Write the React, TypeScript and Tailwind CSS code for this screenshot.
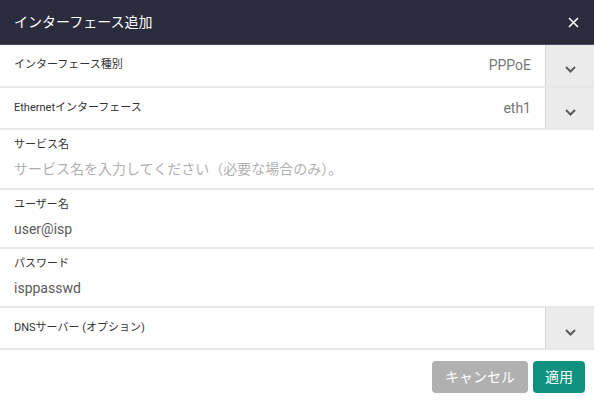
import React from "react";

const font = { fontFamily: 'Roboto, "Noto Sans CJK JP", sans-serif' };

function Chevron() {
  return (
    <svg width="11" height="7" viewBox="0 0 11 7" className="mt-2">
      <polyline points="1,1 5.5,5.5 10,1" fill="none" stroke="#5a5a5a" strokeWidth="2" />
    </svg>
  );
}

function SelectRow({ label, value, h }: { label: string; value?: string; h: string }) {
  return (
    <div className={`flex ${h} border-b-2 border-[#e8e8e8]`}>
      <div className="flex flex-1 items-center justify-between pl-[14px] pr-[14px]">
        <span className="text-[11px] text-[#333]">{label}</span>
        {value && <span className="text-[14px] text-[#777]">{value}</span>}
      </div>
      <div className="flex w-[49px] items-center justify-center border-l border-[#d4d4d4] bg-[#ebebeb]">
        <Chevron />
      </div>
    </div>
  );
}

function InputRow({ label, value, placeholder, h }: { label: string; value?: string; placeholder?: boolean; h: string }) {
  return (
    <div className={`${h} border-b-2 border-[#e8e8e8] pl-[14px] pt-[7px]`}>
      <div className="text-[11px] leading-[16px] text-[#333]">{label}</div>
      <div className={`mt-[6px] text-[14px] leading-[20px] ${placeholder ? "text-[#b0b0b0]" : "text-[#5a5a5a]"}`}>
        {value}
      </div>
    </div>
  );
}

export default function App() {
  return (
    <div className="h-[405px] w-[594px] overflow-hidden bg-white" style={font}>
      <div className="flex h-[45px] items-center justify-between border-b border-[#4a4b5c] bg-[#2a2b3d] pl-[14px] pr-[15px]">
        <span className="text-[14px] text-white">インターフェース追加</span>
        <svg width="11" height="11" viewBox="0 0 11 11">
          <path d="M1 1 L10 10 M10 1 L1 10" stroke="white" strokeWidth="1.6" />
        </svg>
      </div>
      <SelectRow label="インターフェース種別" value="PPPoE" h="h-[43px]" />
      <SelectRow label="Ethernetインターフェース" value="eth1" h="h-[42px]" />
      <InputRow label="サービス名" value="サービス名を入力してください（必要な場合のみ）。" placeholder h="h-[60px]" />
      <InputRow label="ユーザー名" value="user@isp" h="h-[59px]" />
      <InputRow label="パスワード" value="isppasswd" h="h-[59px]" />
      <SelectRow label="DNSサーバー (オプション)" h="h-[42px]" />
      <div className="flex justify-end gap-[5px] pr-[9px] pt-[11px]">
        <button className="h-[32px] w-[96px] rounded-[4px] bg-[#b0b0b0] text-[14px] text-white">キャンセル</button>
        <button className="h-[32px] w-[52px] rounded-[4px] bg-[#0e917f] text-[14px] text-white">適用</button>
      </div>
    </div>
  );
}
